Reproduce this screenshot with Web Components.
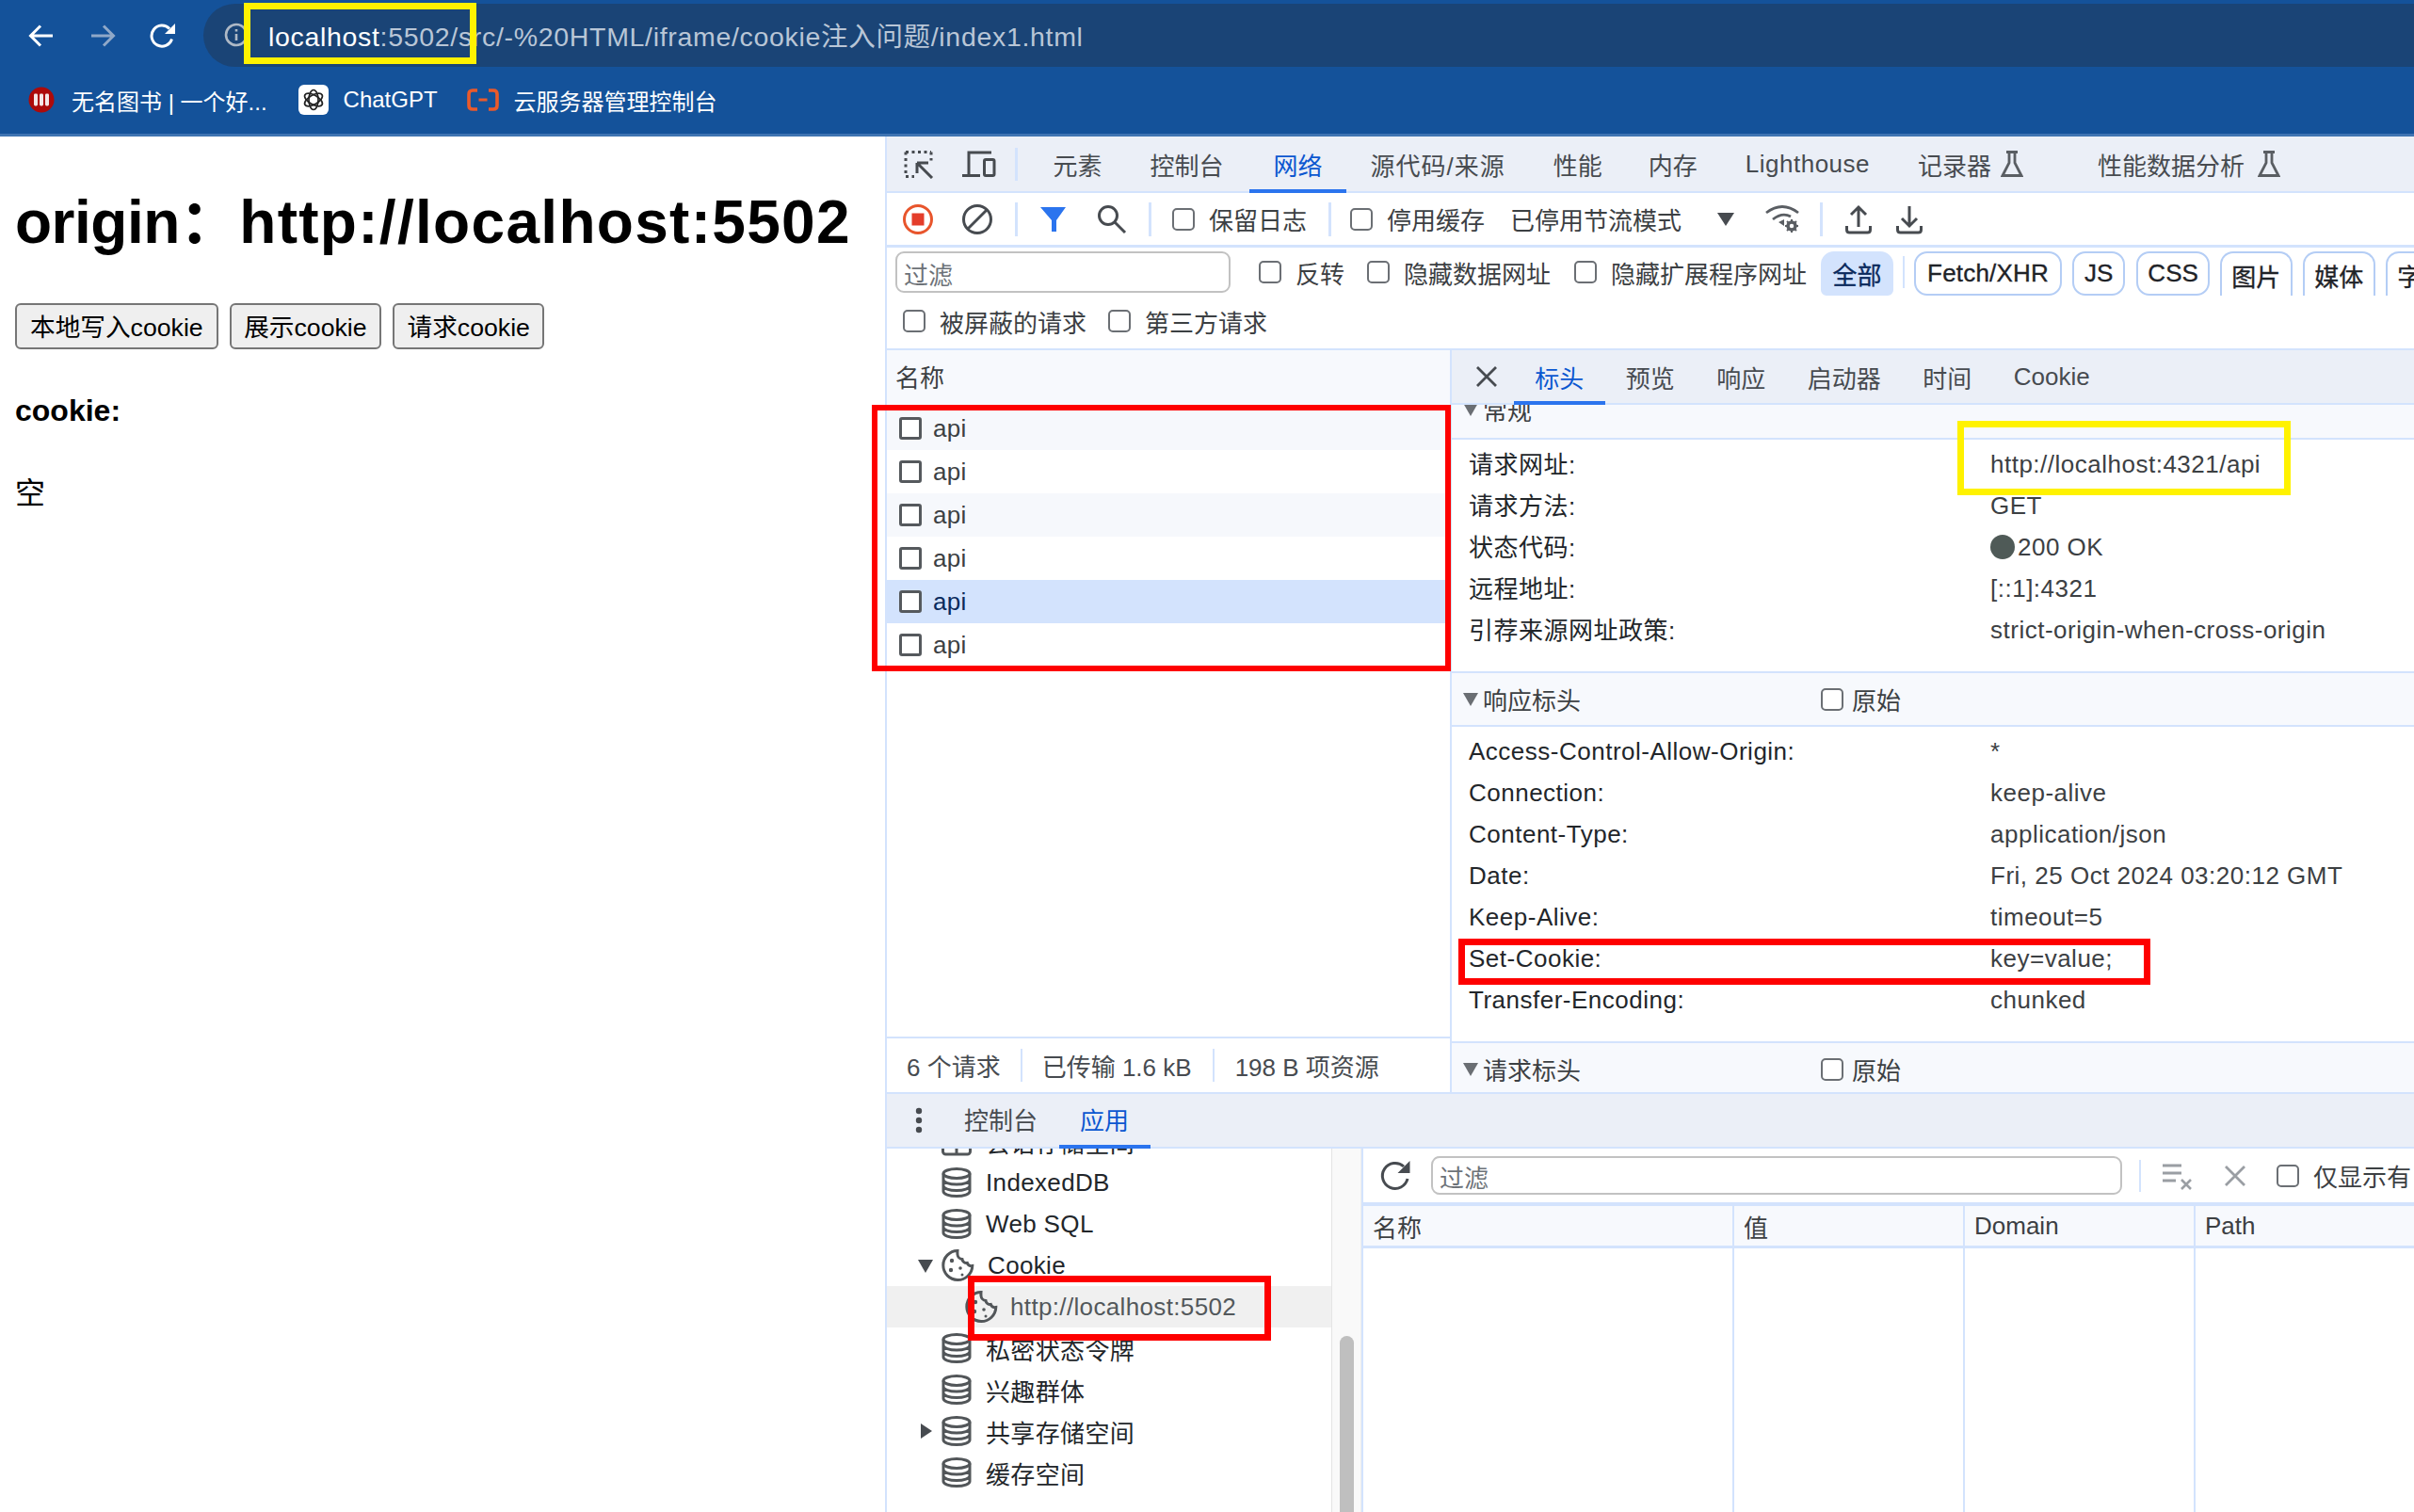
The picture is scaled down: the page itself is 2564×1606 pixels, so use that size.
<!DOCTYPE html>
<html lang="zh"><head><meta charset="utf-8"><title>cookie</title>
<style>
html,body{margin:0;padding:0;width:2564px;height:1606px;overflow:hidden;background:#fff}
body{font-family:"Liberation Sans","Noto Sans CJK SC",sans-serif}
</style></head><body>
<x-app></x-app>
<script>
const ICONS={
back:'<svg viewBox="0 0 28 28" width="28" height="28" fill="none" stroke="currentColor" stroke-width="3"><path d="M26 14H3M13 3.500 2.500 14 13 24.500"/></svg>',
fwd:'<svg viewBox="0 0 28 28" width="28" height="28" fill="none" stroke="currentColor" stroke-width="3"><path d="M2 14h23M15 3.500 25.500 14 15 24.500"/></svg>',
reload:'<svg viewBox="0 0 28 28" width="28" height="28" fill="none"><path d="M23.500 17.500A11 11 0 1 1 21 6.500" stroke="currentColor" stroke-width="3"/><path d="M27 1v11H16z" fill="currentColor"/></svg>',
info:'<svg viewBox="0 0 26 26" width="26" height="26" fill="none" stroke="currentColor" stroke-width="2.600"><circle cx="13" cy="13" r="11"/><path d="M13 12v7M13 7v2.600"/></svg>',
bookred:'<svg viewBox="0 0 28 28" width="28" height="28"><circle cx="14" cy="14" r="13.500" fill="#ad0a0a"/><rect x="6" y="7.500" width="4" height="13" rx="1.400" fill="#f3e6e6"/><rect x="12" y="7.500" width="4" height="13" rx="1.400" fill="#f3e6e6"/><rect x="18" y="7.500" width="4" height="13" rx="1.400" fill="#f3e6e6"/></svg>',
gpt:'<svg viewBox="0 0 32 32" width="32" height="32"><rect width="32" height="32" rx="6" fill="#fff"/><g fill="none" stroke="#222" stroke-width="1.700"><ellipse cx="16" cy="16" rx="5" ry="10.500"/><ellipse cx="16" cy="16" rx="5" ry="10.500" transform="rotate(60 16 16)"/><ellipse cx="16" cy="16" rx="5" ry="10.500" transform="rotate(120 16 16)"/></g></svg>',
ali:'<svg viewBox="0 0 34 24" width="34" height="24" fill="none" stroke="#ea5a2b" stroke-width="3.600"><path d="M11 2H6Q2 2 2 6v12q0 4 4 4h5M23 2h5q4 0 4 4v12q0 4-4 4h-5"/><path d="M12.500 12h9" stroke-width="3"/></svg>',
inspect:'<svg viewBox="0 0 32 32" width="32" height="32" fill="none" stroke="#474b50"><path d="M2 3.500h27M2 3.500v26M29 3.500v9M2 29.500h9" stroke-width="3" stroke-dasharray="3 3.500"/><path d="M14 15h12M14 15v11M15 16l15 15" stroke-width="3"/></svg>',
device:'<svg viewBox="0 0 36 30" width="36" height="30" fill="none" stroke="#474b50" stroke-width="3"><path d="M7 26V3h24M0 27.500h19"/><rect x="23.500" y="10.500" width="10.500" height="17" rx="1.500"/></svg>',
record:'<svg viewBox="0 0 34 34" width="34" height="34"><circle cx="17" cy="17" r="14.500" fill="none" stroke="#e8552c" stroke-width="3"/><rect x="10.500" y="10.500" width="13" height="13" fill="#e43d2b"/></svg>',
block:'<svg viewBox="0 0 34 34" width="34" height="34" fill="none" stroke="#474b50" stroke-width="3"><circle cx="17" cy="17" r="14.500"/><path d="M7 27 27 7"/></svg>',
funnel:'<svg viewBox="0 0 28 28" width="28" height="28" fill="#2b74ee"><path d="M0 1h27L17 15v12h-5V15z"/></svg>',
search:'<svg viewBox="0 0 32 32" width="32" height="32" fill="none" stroke="#474b50" stroke-width="3"><circle cx="12" cy="12" r="9.500"/><path d="M19 19 30 30"/></svg>',
tri:'<svg viewBox="0 0 18 14" width="18" height="14" fill="#474b50"><path d="M0 0h18L9 14z"/></svg>',
wifi:'<svg viewBox="0 0 36 32" width="36" height="32" fill="none" stroke="#5a5e63" stroke-width="2.800"><path d="M1 9Q18-4 35 9M8 16Q18 8 27 13"/><path d="M14 19l6-3v7z" fill="#5a5e63" stroke="none"/><circle cx="28" cy="23" r="4" stroke-width="3.500"/><path d="M28 16v3M28 27v3M21 23h3M32 23h3M23 18l2 2M31 26l2 2M33 18l-2 2M25 26l-2 2" stroke-width="2"/></svg>',
upload:'<svg viewBox="0 0 28 32" width="28" height="32" fill="none" stroke="#474b50" stroke-width="3"><path d="M14 24V3M6 11l8-8 8 8M1.500 23v4q0 3 3 3h19q3 0 3-3v-4"/></svg>',
download:'<svg viewBox="0 0 28 32" width="28" height="32" fill="none" stroke="#474b50" stroke-width="3"><path d="M14 2v21M6 15l8 8 8-8M1.500 23v4q0 3 3 3h19q3 0 3-3v-4"/></svg>',
flask:'<svg viewBox="0 0 24 28" width="24" height="28" fill="none" stroke="#5a5e63" stroke-width="2.800"><path d="M6 1.500h12M9 2v11L2 26.500h20L15 13V2"/></svg>',
close:'<svg viewBox="0 0 24 24" width="24" height="24" fill="none" stroke="currentColor" stroke-width="2.800"><path d="M2 2l20 20M22 2 2 22"/></svg>',
kebab:'<svg viewBox="0 0 8 28" width="8" height="28" fill="#474b50"><circle cx="4" cy="4" r="3.200"/><circle cx="4" cy="14" r="3.200"/><circle cx="4" cy="24" r="3.200"/></svg>',
db:'<svg viewBox="0 0 32 32" width="32" height="32" fill="none" stroke="#525659" stroke-width="3"><ellipse cx="16" cy="6.500" rx="14" ry="5"/><path d="M2 6.500v19c0 2.800 6.300 5 14 5s14-2.200 14-5v-19M2 13c0 2.800 6.300 5 14 5s14-2.200 14-5M2 19.500c0 2.800 6.300 5 14 5s14-2.200 14-5"/></svg>',
grid:'<svg viewBox="0 0 32 32" width="32" height="32" fill="none" stroke="#525659" stroke-width="3"><rect x="1.500" y="2" width="29" height="28" rx="3"/><path d="M1.500 11h29M1.500 20.500h29M16 2v28"/></svg>',
cookie:'<svg viewBox="0 0 36 36" width="36" height="36" fill="none"><path d="M18 2.500A15.500 15.500 0 1 0 33.800 18.500c-2.400.5-4.800-.6-5.500-3-2.600.4-5-1.300-5.300-4-2.700-.3-4.800-2.600-5-5-.1-1.400-.1-2.800 0-4z" stroke="#525659" stroke-width="3"/><circle cx="12" cy="13" r="2.200" fill="#525659"/><circle cx="11" cy="23" r="2.200" fill="#525659"/><circle cx="21" cy="21" r="1.800" fill="#525659"/><circle cx="23" cy="28" r="1.500" fill="#525659"/></svg>',
refresh:'<svg viewBox="0 0 36 36" width="36" height="36" fill="none"><path d="M30 21A13.500 13.500 0 1 1 26 8" stroke="#474b50" stroke-width="3"/><path d="M32.500 2v13h-13z" fill="#474b50"/></svg>',
clear:'<svg viewBox="0 0 34 30" width="34" height="30" fill="none" stroke="#9a9ea3" stroke-width="3"><path d="M1 4h20M1 12h20M1 20h14"/><path d="M21 19l10 10M31 19 21 29" stroke-width="2.600"/></svg>'
};
function def(name,css,html,init){
  const t=document.createElement('template');
  t.innerHTML='<style>'+css+'</style>'+(html||'');
  customElements.define(name,class extends HTMLElement{
    constructor(){super();this.attachShadow({mode:'open'}).appendChild(t.content.cloneNode(true));}
    connectedCallback(){if(init)init(this,this.shadowRoot);}
  });
}
const BASE=':host{display:block;font-family:"Liberation Sans","Noto Sans CJK SC",sans-serif;box-sizing:border-box}*{box-sizing:border-box}';
const LINE='#d3e3fd';

def('x-icon',':host{display:inline-flex;flex:none;line-height:0}','',(h,s)=>{
  if(!s.querySelector('svg')&&h.getAttribute('n')){const d=document.createElement('span');d.style.display='contents';d.innerHTML=ICONS[h.getAttribute('n')]||'';s.appendChild(d);}
});
def('x-check',BASE+':host{display:inline-flex;align-items:center;flex:none;font-size:26px;color:#3c4043;white-space:nowrap}i{display:block;width:24px;height:24px;border:2.500px solid #6b6f74;border-radius:5px;background:#fff;margin-right:15px;flex:none}:host([tight]) i{margin-right:9px}:host([dark]) i{border-color:#55595d;border-width:3px;border-radius:3px;margin-right:12px}','<i></i><slot></slot>');
def('x-sep',':host{display:block;width:3px;height:36px;background:'+LINE+';flex:none}');
def('x-tab',BASE+':host{display:flex;align-items:center;height:100%;padding:0 25.500px;font-size:26px;color:#474b50;white-space:nowrap;position:relative;flex:none;gap:10px}:host([on]){color:#0b57d0}:host([on])::after{content:"";position:absolute;left:0;right:0;bottom:-2px;height:4px;background:#2b74ee}','<slot></slot>');
def('x-chip',BASE+':host{display:flex;align-items:center;height:47px;padding:0 12px;border:2px solid #b4cdf5;border-radius:14px;font-size:26px;color:#1f2328;-webkit-text-stroke:.35px currentColor;flex:none;white-space:nowrap;background:#fff}:host([cut]){border-bottom:0;border-radius:14px 14px 0 0;padding-top:2px;padding-left:10.500px;padding-right:10.500px}:host([on]){background:#d3e3fd;border-color:#d3e3fd;color:#0a2a5c;padding:0 10.500px;border-radius:14px 14px 6px 6px}','<slot></slot>');
def('x-kv',BASE+':host{display:grid;grid-template-columns:554px 1fr;height:44px;align-items:center;padding-left:18px;font-size:26px;letter-spacing:.5px;color:#22262a;white-space:nowrap}.v{color:#3c4043;display:flex;align-items:center}::slotted(.c){display:block;padding-bottom:3px}','<div><slot name="k"></slot></div><div class="v"><slot></slot></div>');
def('x-sec',BASE+':host{display:block}header{height:57px;background:#f7f9fd;border-bottom:2px solid '+LINE+';display:flex;align-items:center;padding-left:12px;padding-bottom:var(--hp,0);font-size:26px;color:#3c4043;position:relative}.t{border-left:8px solid transparent;border-right:8px solid transparent;border-top:14px solid #6a6e73;margin-right:5px}.raw{position:absolute;left:392px;top:0;bottom:0;display:flex;align-items:center}.b{padding:4px 0 22px;background:#fff;border-bottom:2px solid '+LINE+'}',
 '<header><i class="t"></i><span id="t"></span><span class="raw" id="r"></span></header><div class="b"><slot></slot></div>',
 (h,s)=>{s.getElementById('t').textContent=h.getAttribute('t');
   if(h.hasAttribute('raw')){s.getElementById('r').innerHTML='<x-check tight>原始</x-check>';}});
def('x-req',BASE+':host{display:flex;align-items:center;height:46px;padding-left:13px;font-size:26px;letter-spacing:.3px;color:#3c4043;background:#fff}:host([alt]){background:#f6f8fc}:host([sel]){background:#d3e3fd;--c:#0a2a5c}x-check{color:var(--c,#3c4043)}','<x-check dark><slot></slot></x-check>');
def('x-node',BASE+':host{display:flex;align-items:center;height:44px;font-size:26px;letter-spacing:.35px;color:#22262a;white-space:nowrap;position:relative;padding-left:58px;gap:15px}:host([sel]){background:#f0f0f0;color:#53585b;padding-left:82px;gap:13px}i{position:absolute;left:34px;top:14px;width:0;height:0}:host([open]) i{left:33px;top:16px;border-left:8px solid transparent;border-right:8px solid transparent;border-top:14px solid #474b50}:host([closed]) i{left:36px;top:14px;border-top:8px solid transparent;border-bottom:8px solid transparent;border-left:12px solid #474b50}:host([open]){gap:14px;padding-left:57px}',
 '<i></i><x-icon id="ic"></x-icon><span><slot></slot></span>',(h,s)=>{const ic=s.getElementById('ic');if(!ic.shadowRoot.querySelector('svg')){const d=document.createElement('span');d.style.display='contents';d.innerHTML=ICONS[h.getAttribute('i')];ic.shadowRoot.appendChild(d);}});
def('x-mark',':host{display:block;position:absolute;box-sizing:border-box;border-style:solid;pointer-events:none;z-index:10}','',h=>{
  const a=k=>h.getAttribute(k);
  Object.assign(h.style,{left:a('x')+'px',top:a('y')+'px',width:a('w')+'px',height:a('h')+'px',borderColor:a('c'),borderWidth:a('b')+'px'});
});

def('x-browser',BASE+`:host{height:145px;background:#14529a;color:#fff;border-bottom:3px solid #3f74b2;overflow:hidden}
.top{display:flex;align-items:center;height:75px;padding-left:30px}
.omni{margin-left:29px;flex:1;height:67px;background:#1a4476;border-radius:34px 0 0 34px;display:flex;align-items:center;padding-left:22px;padding-bottom:2px;color:#b9c6d6;font-size:28.500px;letter-spacing:.68px;white-space:nowrap}
.omni b{font-weight:400;color:#fff}
.omni span{margin-left:21px}
.marks{display:flex;align-items:center;height:62px;padding-left:30px;font-size:24px;color:#fff;white-space:nowrap}
.marks span{margin-left:18px}`,
`<div class="top"><x-icon n="back"></x-icon><x-icon n="fwd" style="margin-left:37px;color:#8fa8c8"></x-icon><x-icon n="reload" style="margin-left:36px"></x-icon>
<div class="omni"><x-icon n="info" style="color:#aeb9c6"></x-icon><span><b>localhost</b>:5502/src/-%20HTML/iframe/cookie注入问题/index1.html</span></div></div>
<div class="marks"><x-icon n="bookred"></x-icon><span>无名图书 | 一个好...</span><x-icon n="gpt" style="margin-left:33px"></x-icon><span style="margin-left:16px">ChatGPT</span><x-icon n="ali" style="margin-left:31px"></x-icon><span style="margin-left:16px">云服务器管理控制台</span></div>`);

def('x-page',BASE+`:host{padding:0 16px;color:#000;background:#fff;height:100%}
h1{font-size:64px;font-weight:700;margin:0;padding-top:54px;line-height:74px;white-space:nowrap}
h1 span{letter-spacing:1.3px}h1 em{font-style:normal;letter-spacing:-.5px}
.btns{display:flex;gap:12px;margin-top:49px}
button{font:26.670px "Liberation Sans","Noto Sans CJK SC",sans-serif;height:49px;padding:0 14px 2px;background:#efefef;border:2px solid #767676;border-radius:6px;color:#000;white-space:nowrap}
h3{font-size:32px;font-weight:700;margin:43px 0 0;line-height:44px}
p{font-size:32px;margin:44px 0 0;line-height:44px}`,
`<h1><em>origin：</em><span>http://localhost:5502</span></h1><div class="btns"><button style="padding:0 14px 2px">本地写入cookie</button><button style="padding:0 13.500px 2px">展示cookie</button><button style="padding:0 13.500px 2px">请求cookie</button></div><h3>cookie:</h3><p>空</p>`);

def('x-devtools',BASE+`:host{height:100%;border-left:2px solid ${LINE};display:flex;flex-direction:column;overflow:hidden;background:#fff;color:#3c4043;font-size:26px}
.bar{display:flex;align-items:center;background:#ebeff7;flex:none}
.main{height:60px;border-bottom:2px solid ${LINE}}
.tool{height:58px;display:flex;align-items:center;border-bottom:3px solid ${LINE};white-space:nowrap;flex:none}
.flt{height:109px;border-bottom:2px solid ${LINE};flex:none;overflow:hidden;position:relative}
.r1{display:flex;align-items:flex-start;height:47px;margin-top:4px;overflow:hidden;padding-left:9px}
.r2{display:flex;align-items:center;height:54px;padding-left:17px}
.input{border:2.500px solid #c2c2c2;border-radius:9px;color:#6d7278;display:flex;align-items:center;padding:2px 0 0 7px;background:#fff;flex:none;font-size:26px}
.r1 x-check{height:44px}
.split{height:788px;display:grid;grid-template-columns:598px 2px 1fr;flex:none;overflow:hidden}
.left{display:flex;flex-direction:column;min-width:0}
.vl{background:${LINE}}
.nh{height:60px;background:#f7f9fd;border-bottom:2px solid ${LINE};display:flex;align-items:center;padding:0 0 4px 9px;flex:none}
.list{flex:1}
.foot{height:59px;border-top:2px solid ${LINE};display:flex;align-items:center;color:#474b50;flex:none;white-space:nowrap}
.foot x-sep{height:35px;width:2px}
.right{display:flex;flex-direction:column;min-width:0;overflow:hidden}
.dt{height:58px;border-bottom:2px solid ${LINE};flex:none}
.dt x-tab{padding:0 22.250px}
.scroll{flex:1;overflow:hidden;min-height:0}
.scroll>x-sec:first-child{margin-top:-20px;--hp:6px}
.st{border-radius:50%;background:#4f5a57;margin-right:3px;flex:none;width:26px;height:26px}
.dbar{height:60px;border-top:2px solid ${LINE};border-bottom:2px solid ${LINE};flex:none}
.dbar x-tab{padding:0 22.500px 3px}
.drawer{flex:1;display:grid;grid-template-columns:473px 31px 2px 1fr;min-height:0;overflow:hidden}
.tree{overflow:hidden;border-right:1px solid #e4e4e4}
.tree>.inner{margin-top:-30px}
.track{background:#f9f9f9;position:relative;border-right:1px solid #eee}
.thumb{position:absolute;left:8px;width:15px;top:199px;bottom:-20px;background:#bfbfbf;border-radius:8px}
.ck{display:flex;flex-direction:column;min-width:0}
.ctool{height:57px;display:flex;align-items:center;flex:none;white-space:nowrap;overflow:hidden}
.tb{flex:1;display:grid;grid-template-columns:394px 245px 245px 1fr;grid-template-rows:45px 1fr;border-top:4px solid ${LINE}}
.tb div{border-right:2px solid ${LINE};background:#f7f9fd;border-bottom:3px solid ${LINE};display:flex;align-items:center;padding-left:10px}
.tb .e{background:#fff;border-bottom:0}
`,
`<div class="bar main"><x-icon n="inspect" style="margin-left:18px"></x-icon><x-icon n="device" style="margin-left:30px"></x-icon><x-sep style="margin:0 12px 0 20px;height:35px"></x-sep>
<x-tab>元素</x-tab><x-tab>控制台</x-tab><x-tab on style="margin-left:2px">网络</x-tab><x-tab style="letter-spacing:1px">源代码/来源</x-tab><x-tab>性能</x-tab><x-tab style="margin-left:-2px">内存</x-tab><x-tab style="letter-spacing:.5px">Lighthouse</x-tab><x-tab>记录器<x-icon n="flask"></x-icon></x-tab><x-tab style="margin-left:28px;gap:14px">性能数据分析<x-icon n="flask"></x-icon></x-tab></div>
<div class="tool"><x-icon n="record" style="margin-left:16px"></x-icon><x-icon n="block" style="margin-left:29px"></x-icon><x-sep style="margin:0 24px 0 23px"></x-sep><x-icon n="funnel"></x-icon><x-icon n="search" style="margin-left:32px"></x-icon><x-sep style="margin:0 22px 0 23px"></x-sep>
<x-check>保留日志</x-check><x-sep style="margin:0 20px 0 23px"></x-sep><x-check>停用缓存</x-check><span style="margin-left:27px">已停用节流模式</span><x-icon n="tri" style="margin-left:38px"></x-icon><x-icon n="wifi" style="margin-left:33px"></x-icon><x-sep style="margin:0 24px 0 22px"></x-sep><x-icon n="upload"></x-icon><x-icon n="download" style="margin-left:26px"></x-icon></div>
<div class="flt"><div class="r1"><div class="input" style="width:356px;height:44px">过滤</div><x-check style="margin-left:30px">反转</x-check><x-check style="margin-left:24px">隐藏数据网址</x-check><x-check style="margin-left:25px">隐藏扩展程序网址</x-check>
<x-chip on style="margin-left:15px">全部</x-chip><x-sep style="height:34px;width:2px;margin:5px 10px 0"></x-sep><x-chip style="letter-spacing:.2px">Fetch/XHR</x-chip><x-chip style="margin-left:11px;padding:0 11px">JS</x-chip><x-chip style="margin-left:12px;padding:0 10px">CSS</x-chip><x-chip cut style="margin-left:11px">图片</x-chip><x-chip cut style="margin-left:11px">媒体</x-chip><x-chip cut style="margin-left:11px">字体</x-chip></div>
<div class="r2"><x-check>被屏蔽的请求</x-check><x-check style="margin-left:23px">第三方请求</x-check></div></div>
<div class="split"><div class="left"><div class="nh">名称</div><div class="list"><x-req alt>api</x-req><x-req>api</x-req><x-req alt>api</x-req><x-req>api</x-req><x-req sel>api</x-req><x-req>api</x-req></div>
<div class="foot"><span style="margin-left:21px">6 个请求</span><x-sep style="margin:0 21px"></x-sep><span>已传输 1.6 kB</span><x-sep style="margin:0 22px"></x-sep><span>198 B 项资源</span></div></div>
<div class="vl"></div>
<div class="right"><div class="bar dt"><x-icon n="close" style="margin:0 17px 0 25px;color:#474b50"></x-icon><x-tab on>标头</x-tab><x-tab>预览</x-tab><x-tab>响应</x-tab><x-tab>启动器</x-tab><x-tab>时间</x-tab><x-tab>Cookie</x-tab></div>
<div class="scroll"><x-sec t="常规"><x-kv><span class="c" slot="k">请求网址:</span>http://localhost:4321/api</x-kv><x-kv><span class="c" slot="k">请求方法:</span>GET</x-kv><x-kv><span class="c" slot="k">状态代码:</span><span class="st"></span>200 OK</x-kv><x-kv><span class="c" slot="k">远程地址:</span>[::1]:4321</x-kv><x-kv><span class="c" slot="k">引荐来源网址政策:</span>strict-origin-when-cross-origin</x-kv></x-sec>
<x-sec t="响应标头" raw><x-kv><span slot="k">Access-Control-Allow-Origin:</span>*</x-kv><x-kv><span slot="k">Connection:</span>keep-alive</x-kv><x-kv><span slot="k">Content-Type:</span>application/json</x-kv><x-kv><span slot="k">Date:</span>Fri, 25 Oct 2024 03:20:12 GMT</x-kv><x-kv><span slot="k">Keep-Alive:</span>timeout=5</x-kv><x-kv><span slot="k">Set-Cookie:</span>key=value;</x-kv><x-kv><span slot="k">Transfer-Encoding:</span>chunked</x-kv></x-sec>
<x-sec t="请求标头" raw></x-sec></div></div></div>
<div class="bar dbar"><x-icon n="kebab" style="margin-left:30px"></x-icon><x-tab style="margin-left:21.500px">控制台</x-tab><x-tab on>应用</x-tab></div>
<div class="drawer"><div class="tree"><div class="inner"><x-node i="grid">会话存储空间</x-node><x-node i="db">IndexedDB</x-node><x-node i="db">Web SQL</x-node><x-node i="cookie" open>Cookie</x-node><x-node i="cookie" sel>http://localhost:5502</x-node><x-node i="db">私密状态令牌</x-node><x-node i="db">兴趣群体</x-node><x-node i="db" closed>共享存储空间</x-node><x-node i="db">缓存空间</x-node></div></div>
<div class="track"><div class="thumb"></div></div><div class="vl"></div>
<div class="ck"><div class="ctool"><x-icon n="refresh" style="margin-left:17px"></x-icon><div class="input" style="width:734px;height:41px;margin-left:19px">过滤</div><x-sep style="margin:0 22px 0 18px;width:2px;height:34px"></x-sep><x-icon n="clear"></x-icon><x-icon n="close" style="margin-left:32px;color:#9a9ea3"></x-icon><x-check style="margin-left:32px">仅显示有</x-check></div>
<div class="tb"><div>名称</div><div>值</div><div>Domain</div><div style="border-right:0">Path</div><div class="e"></div><div class="e"></div><div class="e"></div><div class="e" style="border-right:0"></div></div></div></div>`);

def('x-app',BASE+`:host{position:relative;width:2564px;height:1606px;display:grid;grid-template-rows:145px 1fr;overflow:hidden}
.m{display:grid;grid-template-columns:940px 1fr;min-height:0}`,
`<x-browser></x-browser><div class="m"><x-page></x-page><x-devtools></x-devtools></div>
<x-mark x="259" y="3" w="247" h="65" b="7" c="#fff200"></x-mark>
<x-mark x="926" y="430" w="615" h="283" b="6" c="#fe0000"></x-mark>
<x-mark x="2079" y="447" w="354" h="79" b="7" c="#fff200"></x-mark>
<x-mark x="1549" y="997" w="735" h="49" b="7" c="#fe0000"></x-mark>
<x-mark x="1028" y="1355" w="322" h="69" b="7" c="#fe0000"></x-mark>`);
</script></body></html>
